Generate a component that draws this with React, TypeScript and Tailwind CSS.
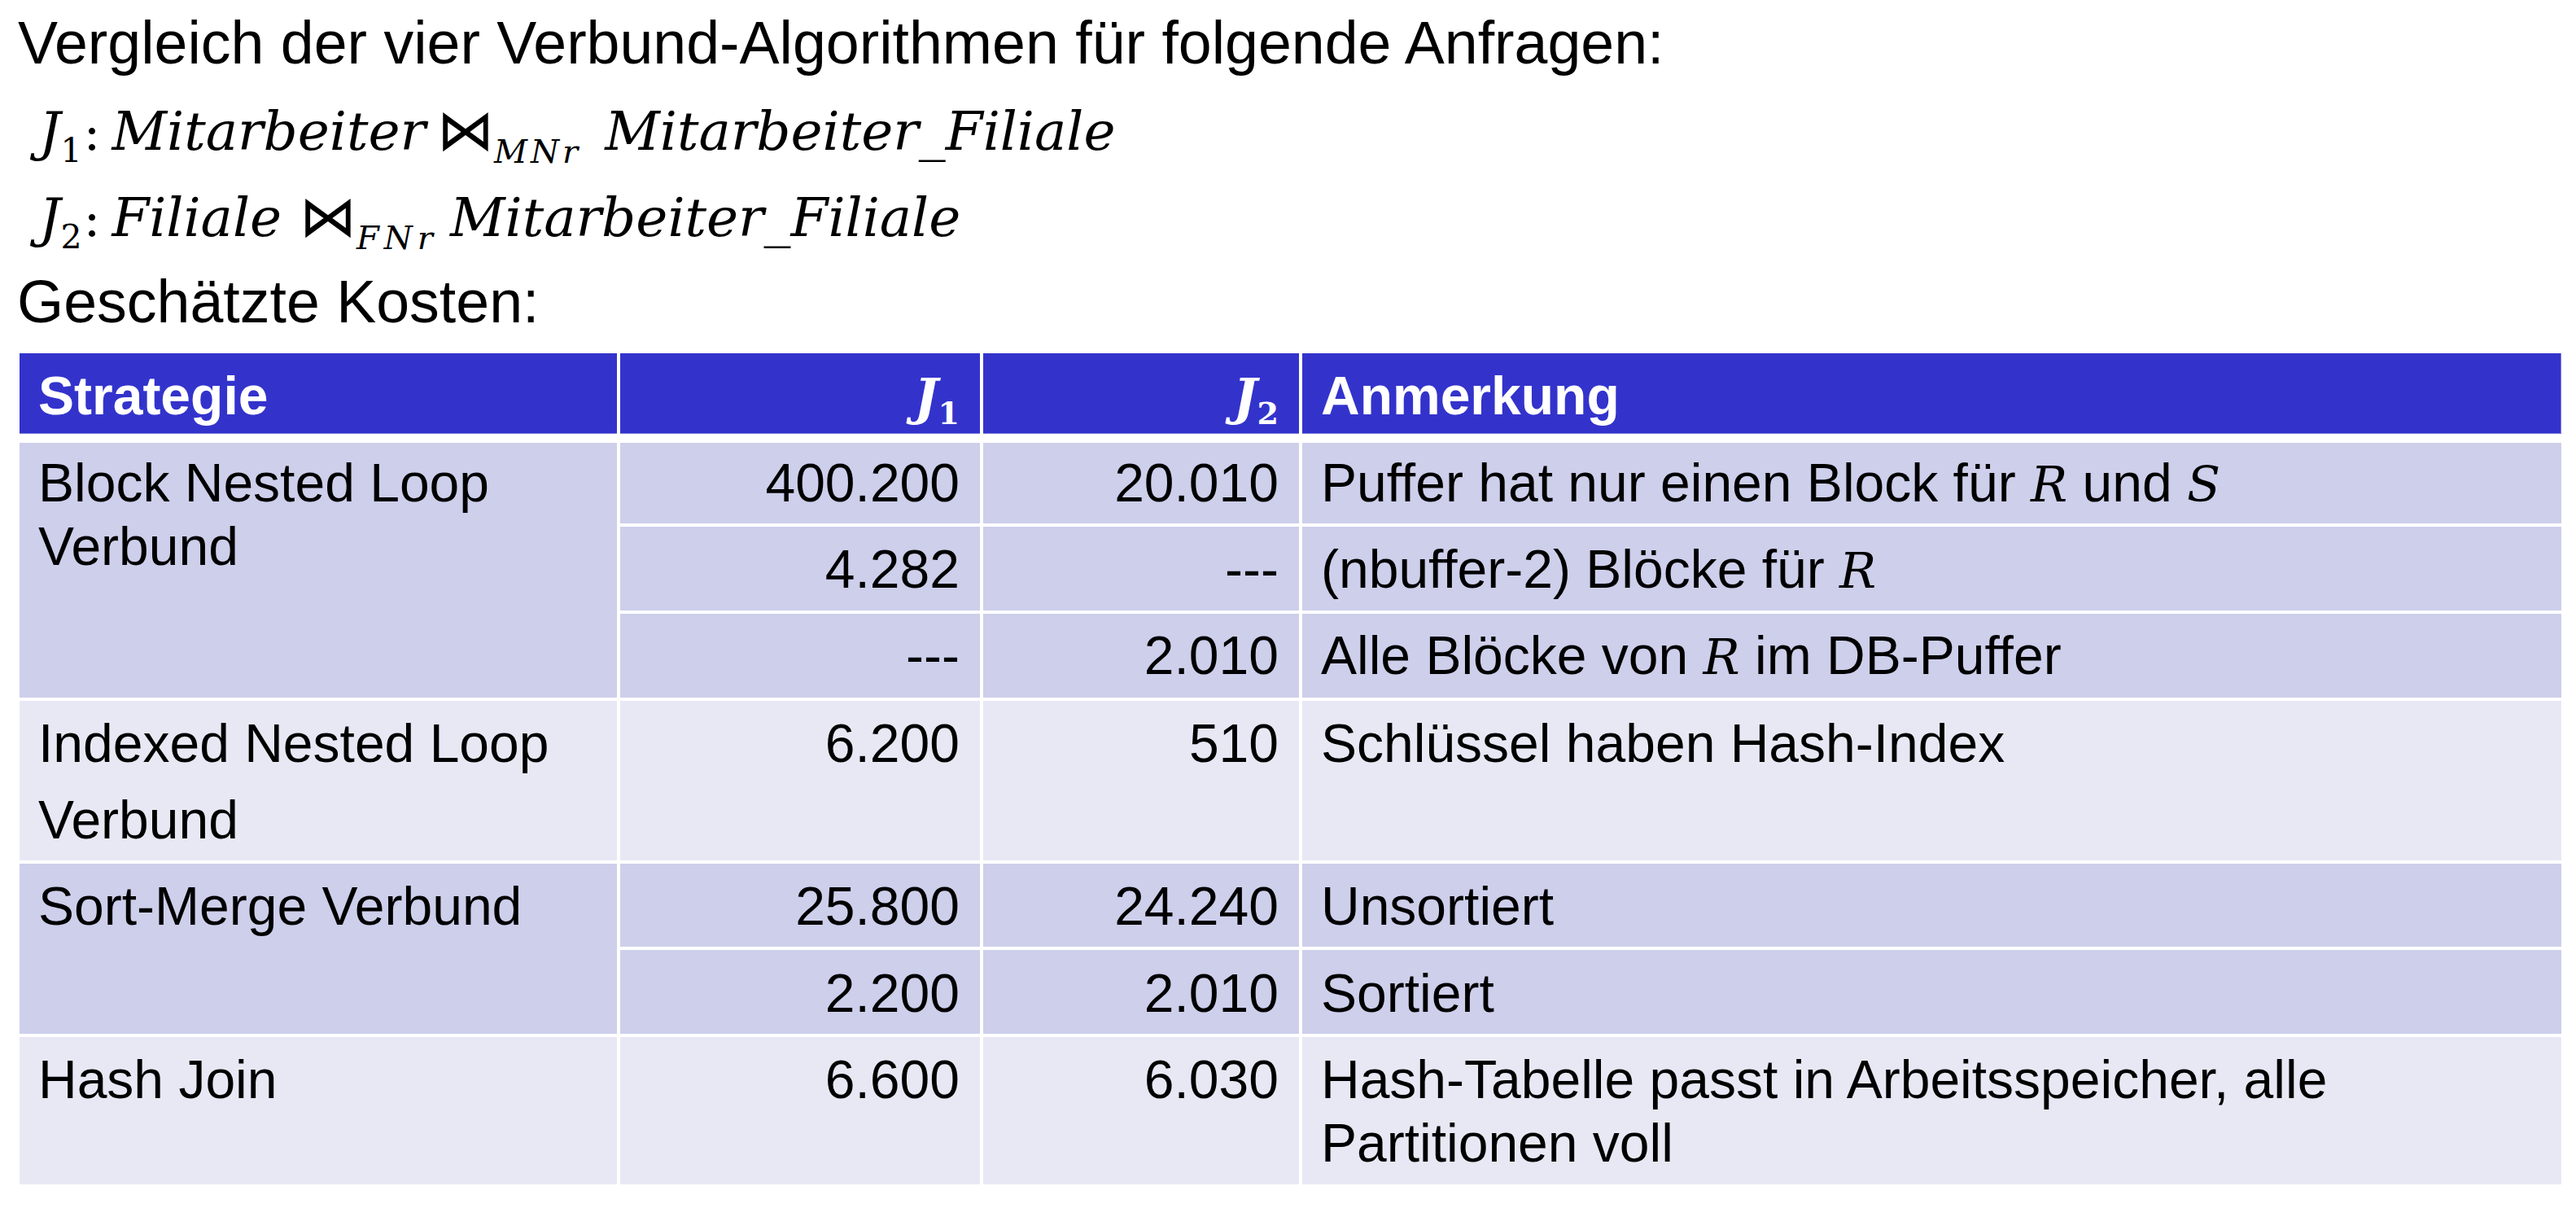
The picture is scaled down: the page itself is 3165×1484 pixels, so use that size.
import React from "react";

const SERIF_I = "font-['DejaVu_Serif',serif] italic";
const SERIF = "font-['DejaVu_Serif',serif]";
const BOW = "font-['DejaVu_Sans',sans-serif] text-[70px] leading-none";

function Math1() {
  return (
    <div className="h-[106px] leading-[106px] pl-[48px] whitespace-nowrap text-[72px]">
      <span className={SERIF_I + " text-[66px] leading-none"}>J</span>
      <span className={SERIF + " text-[41px] leading-none align-[-15px]"}>1</span>
      <span className={SERIF + " text-[62px] leading-none ml-[2px]"}>:</span>
      <span className={SERIF_I + " text-[66px] leading-none ml-[14px]"}>Mitarbeiter</span>
      <span className={BOW + " ml-[14px]"}>⋈</span>
      <span className={SERIF_I + " text-[40px] leading-none align-[-16px] ml-[0px] tracking-[4px]"}>MNr</span>
      <span className={SERIF_I + " text-[66px] leading-none ml-[29px]"}>Mitarbeiter_Filiale</span>
    </div>
  );
}

function Math2() {
  return (
    <div className="h-[106px] leading-[106px] pl-[48px] whitespace-nowrap text-[72px]">
      <span className={SERIF_I + " text-[66px] leading-none"}>J</span>
      <span className={SERIF + " text-[41px] leading-none align-[-15px]"}>2</span>
      <span className={SERIF + " text-[62px] leading-none ml-[2px]"}>:</span>
      <span className={SERIF_I + " text-[66px] leading-none ml-[14px]"}>Filiale</span>
      <span className={BOW + " ml-[22px]"}>⋈</span>
      <span className={SERIF_I + " text-[40px] leading-none align-[-16px] ml-[0px] tracking-[6px]"}>FNr</span>
      <span className={SERIF_I + " text-[66px] leading-none ml-[15px]"}>Mitarbeiter_Filiale</span>
    </div>
  );
}

function V({ children }: { children: React.ReactNode }) {
  return <span className={SERIF_I + " text-[60px] leading-none"}>{children}</span>;
}

function HJ({ n }: { n: string }) {
  return (
    <span className="whitespace-nowrap">
      <span className={SERIF_I + " font-bold text-[62px] leading-none"}>J</span>
      <span className={SERIF + " font-bold text-[38px] leading-none align-[-12px]"}>{n}</span>
    </span>
  );
}

const DARK = "bg-[#cdcfeb]";
const LIGHT = "bg-[#e8e8f5]";

export default function App() {
  return (
    <div className="w-[3165px] h-[1484px] bg-white overflow-hidden text-black font-['Liberation_Sans',Arial,sans-serif]">
      <div className="h-[106px] leading-[106px] text-[73.5px] pl-[22px] whitespace-nowrap">
        Vergleich der vier Verbund-Algorithmen für folgende Anfragen:
      </div>
      <Math1 />
      <Math2 />
      <div className="h-[106px] leading-[106px] text-[73.5px] pl-[21px] whitespace-nowrap">Geschätzte Kosten:</div>

      <div className="mt-[10px] ml-[24px] w-[3123px] text-[66px] leading-[78px]">
        {/* header */}
        <div className="grid grid-cols-[734px_442px_388px_1547px] gap-x-[4px] h-[99px] text-white font-bold">
          <div className="bg-[#3333cc] pl-[23px] pt-[13px] shadow-[inset_0_-1px_0_#7c7ce0]">Strategie</div>
          <div className="bg-[#3333cc] pr-[25px] pt-[13px] text-right shadow-[inset_0_-1px_0_#7c7ce0]">
            <HJ n="1" />
          </div>
          <div className="bg-[#3333cc] pr-[25px] pt-[13px] text-right shadow-[inset_0_-1px_0_#7c7ce0]">
            <HJ n="2" />
          </div>
          <div className="bg-[#3333cc] pl-[23px] pt-[13px] shadow-[inset_0_-1px_0_#7c7ce0,inset_-1px_0_0_#7c7ce0]">Anmerkung</div>
        </div>

        {/* body */}
        <div className="mt-[11px] grid grid-cols-[734px_442px_388px_1547px] grid-rows-[99px_103px_103px_196px_102px_103px_181px] gap-x-[4px] gap-y-[4px]">
          {/* row 1 */}
          <div className={DARK + " row-span-3 pl-[23px] pt-[10px]"}>
            Block Nested Loop
            <br />
            Verbund
          </div>
          <div className={DARK + " pr-[25px] pt-[10px] text-right"}>400.200</div>
          <div className={DARK + " pr-[25px] pt-[10px] text-right"}>20.010</div>
          <div className={DARK + " pl-[23px] pt-[10px] whitespace-nowrap"}>
            Puffer hat nur einen Block für <V>R</V> und <V>S</V>
          </div>
          {/* row 2 */}
          <div className={DARK + " pr-[25px] pt-[13px] text-right"}>4.282</div>
          <div className={DARK + " pr-[25px] pt-[13px] text-right"}>---</div>
          <div className={DARK + " pl-[23px] pt-[13px] whitespace-nowrap"}>
            (nbuffer-2) Blöcke für <V>R</V>
          </div>
          {/* row 3 */}
          <div className={DARK + " pr-[25px] pt-[12px] text-right"}>---</div>
          <div className={DARK + " pr-[25px] pt-[12px] text-right"}>2.010</div>
          <div className={DARK + " pl-[23px] pt-[12px] whitespace-nowrap"}>
            Alle Blöcke von <V>R</V> im DB-Puffer
          </div>
          {/* row 4 */}
          <div className={LIGHT + " pl-[23px] pt-[5px] leading-[94px]"}>
            Indexed Nested Loop
            <br />
            Verbund
          </div>
          <div className={LIGHT + " pr-[25px] pt-[13px] text-right"}>6.200</div>
          <div className={LIGHT + " pr-[25px] pt-[13px] text-right"}>510</div>
          <div className={LIGHT + " pl-[23px] pt-[13px]"}>Schlüssel haben Hash-Index</div>
          {/* row 5 */}
          <div className={DARK + " row-span-2 pl-[23px] pt-[13px]"}>Sort-Merge Verbund</div>
          <div className={DARK + " pr-[25px] pt-[13px] text-right"}>25.800</div>
          <div className={DARK + " pr-[25px] pt-[13px] text-right"}>24.240</div>
          <div className={DARK + " pl-[23px] pt-[13px]"}>Unsortiert</div>
          {/* row 6 */}
          <div className={DARK + " pr-[25px] pt-[14px] text-right"}>2.200</div>
          <div className={DARK + " pr-[25px] pt-[14px] text-right"}>2.010</div>
          <div className={DARK + " pl-[23px] pt-[14px]"}>Sortiert</div>
          {/* row 7 */}
          <div className={LIGHT + " pl-[23px] pt-[13px]"}>Hash Join</div>
          <div className={LIGHT + " pr-[25px] pt-[13px] text-right"}>6.600</div>
          <div className={LIGHT + " pr-[25px] pt-[13px] text-right"}>6.030</div>
          <div className={LIGHT + " pl-[23px] pt-[13px]"}>
            Hash-Tabelle passt in Arbeitsspeicher, alle
            <br />
            Partitionen voll
          </div>
        </div>
      </div>
    </div>
  );
}
